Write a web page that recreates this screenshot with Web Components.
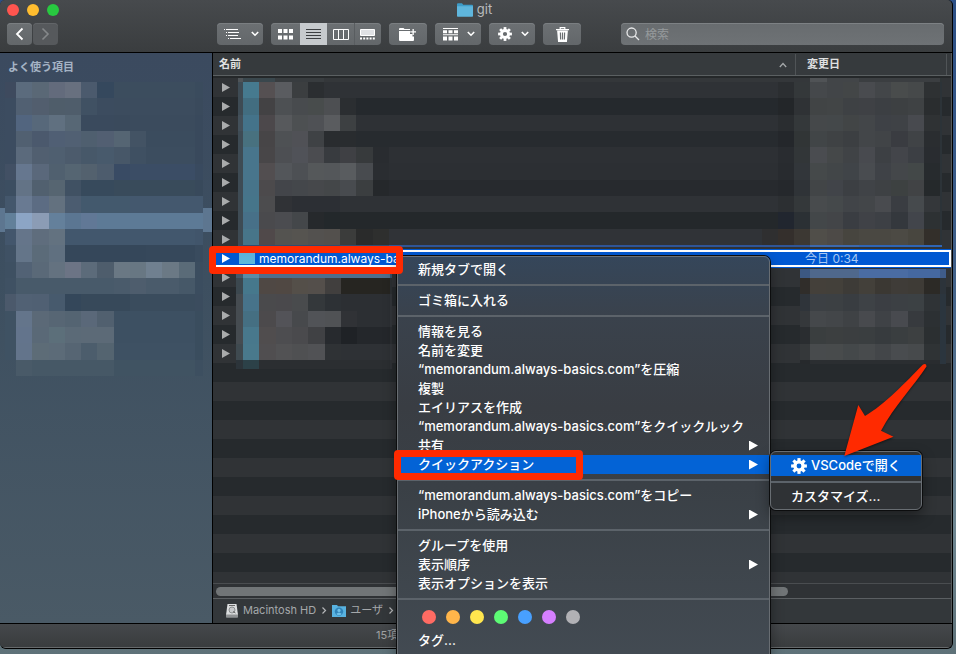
<!DOCTYPE html>
<html lang="ja">
<head>
<meta charset="utf-8">
<title>git</title>
<style>
html,body{margin:0;height:100%}
body{font-family:Inter,"Noto Sans CJK JP",sans-serif;font-size:13px;line-height:19px;color:#fff;overflow:hidden}
</style>
</head>
<body>
<desk-top></desk-top>
<script>
const BASE = `<style>*{box-sizing:border-box}button,input{font:inherit;color:inherit;border:0;margin:0;padding:0;background:none;text-align:inherit;outline:0}svg{display:block}</style>`;
function define(name, html, setup) {
  const t = document.createElement('template');
  t.innerHTML = BASE + html;
  customElements.define(name, class extends HTMLElement {
    constructor() {
      super();
      this.attachShadow({mode: 'open'}).append(t.content.cloneNode(true));
    }
    connectedCallback() { if (setup) setup(this, this.shadowRoot); }
  });
}
const labelButton = (host, root) => {
  const l = host.getAttribute('label');
  if (l) root.querySelector('button').setAttribute('aria-label', l);
};

/* Pixelated cover: "cols" and "rows" are grid templates, each text line is a row of colours, "*n" repeats */
define('pixel-cover', `<style>
:host{display:grid;pointer-events:none}
</style>`, (host, root) => {
  host.style.gridTemplateColumns = host.getAttribute('cols');
  host.style.gridTemplateRows = host.getAttribute('rows');
  host.textContent.trim().split('\n').forEach((line, r) => {
    let c = 1;
    line.trim().split(/\s+/).forEach(tok => {
      const [col, n = '1'] = tok.split('*');
      const d = document.createElement('div');
      d.style.gridArea = `${r + 1} / ${c} / ${r + 2} / ${c + +n}`;
      if (col !== '-') d.style.background = '#' + col;
      c += +n;
      root.append(d);
    });
  });
  host.textContent = '';
});

define('traffic-light', `<style>
:host{display:flex}
button{width:12px;height:12px;border-radius:50%;background:var(--c)}
</style><button></button>`, labelButton);

define('tool-button', `<style>
:host{display:flex;width:38px;height:22px}
button{flex:1;display:flex;align-items:center;justify-content:center;gap:8px;border-radius:4px;background:linear-gradient(#6c7073,#63676a);box-shadow:inset 0 1px #7a7e81}
:host([nav]){width:25px}
:host([wide]){width:46px}
:host([wide]) button{padding-left:3px}
:host([dim]) button{background:#56595c;box-shadow:inset 0 1px #626568}
:host([seg]){width:27px}
:host([seg]) button{border-radius:0}
:host([seg=first]){width:29px}
:host([seg=first]) button{border-radius:4px 0 0 4px}
:host([seg=last]) button{border-radius:0 4px 4px 0;box-shadow:inset 1px 0 #595d60,inset 0 1px #7a7e81}
:host([on]) button{background:#c6cacd;box-shadow:none}
</style><button><slot></slot></button>`, labelButton);

define('search-field', `<style>
:host{display:block}
label{display:flex;align-items:center;gap:5px;height:22px;padding:0 5px;border-radius:4px;background:linear-gradient(#686c6f,#6e7275);box-shadow:inset 0 1px #7d8184}
input{flex:1;min-width:0;font-size:12px}
input::placeholder{color:#969a9c;opacity:1}
</style><label><svg width="14" height="14" viewBox="0 0 14 14" fill="none" stroke="#e8e9ea" stroke-width="1.3"><circle cx="5.6" cy="5.6" r="4.6"/><path d="M9 9l4 4"/></svg><input type="text" placeholder="検索" aria-label="検索"></label>`);

const CHEV = `<svg width="10" height="6" viewBox="0 0 10 6" fill="none" stroke="#fff" stroke-width="1.6"><path d="M1.8 1l3.2 3.2L8.2 1"/></svg>`;
const teeth = () => Array.from({length: 8}, (_, i) => `<rect x="-1.5" y="-7.5" width="3" height="4" transform="rotate(${i * 45})"/>`).join('');
const GEAR = s => `<svg width="${s}" height="${s}" viewBox="-7.6 -7.6 15.2 15.2" fill="#fff">${teeth()}<circle r="3.9" fill="none" stroke="#fff" stroke-width="3.2"/></svg>`;
const FOLDER = (w, h) => `<svg width="${w}" height="${h}" viewBox="0 0 16 14"><path d="M0 1.2Q0 .3 1 .3h4l1.2 1.4H15q1 0 1 1V13H0z" fill="#3d9cc8"/><path d="M0 3.2h16V13q0 .7-.8.7H.8Q0 13.700 0 13z" fill="#5fb6dd"/></svg>`;

define('window-toolbar', `<style>
:host{display:block;height:53px;border-bottom:1px solid #000;background:linear-gradient(#474a4d,#3a3d3f);border-radius:5px 5px 0 0}
.title{display:grid;grid-template-columns:1fr auto 1fr;align-items:center;height:19px;padding:0 10px 0 7px;color:#b9bbbd;font-size:13px}
.lights,.name,.tools,.group,.nav{display:flex;align-items:center}
.lights{gap:8px}.name{gap:4px}
.tools{gap:8px;padding:4px 8px 0 7px}
.nav{gap:1px;margin-right:151px}
search-field{flex:1;margin-left:32px}
</style>
<div class="title"><div class="lights"><traffic-light label="閉じる" style="--c:#ff554f"></traffic-light><traffic-light label="しまう" style="--c:#ffbd2f"></traffic-light><traffic-light label="拡大" style="--c:#28c940"></traffic-light></div>
<div class="name">${FOLDER(16, 14)}<span>git</span></div><span></span></div>
<div class="tools">
<div class="nav"><tool-button nav label="戻る"><svg width="9" height="14" viewBox="0 0 9 14" fill="none" stroke="#fff" stroke-width="1.8"><path d="M7.500 1.500L2 7l5.500 5.500"/></svg></tool-button><tool-button nav dim label="進む"><svg width="9" height="14" viewBox="0 0 9 14" fill="none" stroke="#85888a" stroke-width="1.6"><path d="M1.500 1.500L7 7l-5.500 5.500"/></svg></tool-button></div>
<tool-button wide label="アウトライン"><svg width="18" height="11" viewBox="0 0 18 11" fill="#fff"><path d="M0 0h1v1H0zM2 0h12v1H2zM2 3h1v1H2zM4 3h11v1H4zM2 6h1v1H2zM4 6h10v1H4zM4 9h1v1H4zM6 9h11v1H6z"/></svg>${CHEV}</tool-button>
<div class="group"><tool-button seg="first" label="アイコン"><svg width="15" height="11" viewBox="0 0 15 11" fill="#fff"><path d="M0 0h4v4H0zM5.500 0h4v4h-4zM11 0h4v4h-4zM0 6.500h4v4H0zM5.500 6.500h4v4h-4zM11 6.500h4v4h-4z"/></svg></tool-button><tool-button seg="mid" on label="リスト"><svg width="15" height="11" viewBox="0 0 15 11" fill="#3c3f42"><path d="M0 0h15v1H0zM0 3h15v1H0zM0 6h15v1H0zM0 9h15v1H0z"/></svg></tool-button><tool-button seg="mid" label="カラム"><svg width="16" height="11" viewBox="0 0 16 11" fill="none" stroke="#fff"><path d="M.5.5h15v10H.5zM5.500.5v10M10.500.5v10"/></svg></tool-button><tool-button seg="last" label="ギャラリー"><svg width="15" height="11" viewBox="0 0 15 11" fill="#fff"><path d="M.5.5h14v6H.5z" fill="#dfe1e4" stroke="#fff"/><path d="M0 8.500h2v2H0zM3.200 8.500h2v2h-2zM6.400 8.500h2v2h-2zM9.600 8.500h2v2h-2zM12.800 8.500h2v2h-2z"/></svg></tool-button></div>
<tool-button label="新規フォルダ"><svg width="18" height="13" viewBox="0 0 18 13" fill="#fff"><path d="M0 1q0-1 1-1h3.500l1 1H11v1H0zM0 3h11v3h2.500v2.500H15V12q0 1-1 1H1q-1 0-1-1z"/><path d="M13.500 1h1.300v2.300H17v1.300h-2.200V7h-1.300V4.600h-2.300V3.300h2.300z"/></svg></tool-button>
<tool-button wide label="グループ"><svg width="15" height="13" viewBox="0 0 15 13" fill="#fff"><path d="M0 0h15v1H0zM0 6.200h15v1H0zM0 2.200h4v3H0zM5.500 2.200h4v3h-4zM11 2.200h4v3h-4zM0 8.600h4v4H0zM5.500 8.600h4v4h-4zM11 8.600h4v4h-4z"/></svg>${CHEV}</tool-button>
<tool-button wide label="アクション">${GEAR(14)}${CHEV}</tool-button>
<tool-button label="ゴミ箱"><svg width="13" height="15" viewBox="0 0 13 15" fill="none" stroke="#fff" stroke-width="1.200"><path d="M0 2.600h13M4.200 2.400V.7h4.600v1.700"/><path d="M1.800 4h9.400l-.8 10.300H2.600z" fill="#fff"/><path d="M4.400 5.500l.2 7M6.500 5.500v7M8.600 5.500l-.2 7" stroke="#6a6e71"/></svg></tool-button>
<search-field></search-field>
</div>`);

define('side-bar', `<style>
:host{display:block;position:relative;width:213px;border-right:1px solid #000;background:linear-gradient(#3b4a5f,#3d4f60 40%,#4a5a66)}
h2{margin:0;padding:5px 8px 11px;font-size:11px;font-weight:700;color:#a5b3c4;line-height:19px}
ul{list-style:none;margin:0;padding:0}
li{height:24px}
li.on{background:#5d7690}
pixel-cover{position:absolute;left:5px;top:29px;width:198px;height:294px}
</style>
<h2>よく使う項目</h2>
<ul><li></li><li></li><li></li><li></li><li></li><li class="on"></li></ul>
<pixel-cover cols="11px repeat(11,1fr) 8px" rows="repeat(18,1fr)">
3e4a5e 5b6b7d 5a6876 636b7c 68707f 4b5a6d 35485d 3c4d5e*5 3a4b5d
3c4c60 516072 525e6e 4f5d6a 4f5d6b 405163 3c4c5f 3c4c5e*5 3a4a5c
3c4c60 52657f 57687a 607080 576775 3a4a5d*2 3a4a5c 3b4b5d*4 39495c
3c4c60 516071 4b596d 505f74 516073 4f5f6f 525f72 556573 435364 3b4c5e*3 39495c
3c4c60 5b6a7c 515f70 4f5f70 4c5b6c 475869 485a6c 475768 3f5062 3c4d5f*3 39495c
425064 66778f 5a687b 50606f 556572 53616e 4d5c6d 394b64 3b4d65*4 394a5f
3c4e61 637386 51606f 566571 405163 374a5c*2 394b5b*5 38495b
44576c 697a92 5c6c83 63717f 4b5c70 43596d*3 44586e*5
62809a 8ca5c5 8b9cb5 64809b 5b7692 617896 5d7a96*7
43566c 65758a 5f6d7d 637280 42576d*8 41556b
3f5164 647589 5b6b79 607080 35475a*5 36485b*3 394b5e
3e5062 526275 5a6978 647280 6c7485 5c6b7a 4e5d6c 6a7884 687783 708090 6b7985 5a6b78 3b4d5f
3f5163 485a6a*6 4a5b6b 4e5d6d 4a5b6b*2 465868 3b4d5f
4b596b 516174 506073 475a6d 34475a 37495a*3 3a4c5d*4 3b4c5e
3f5263 64758b 5b6977 576674 546472 5a6879 51606f 3d5062*5 3a4d5e
3f5263 63748c 5a6977 5c6f7a 5b6a77 5c6a77*2 3d5062*5 3a4d5e
3f5263 63748b 5d6c77 5c6b78 566573 4c5d6c 546470 3e5163*5 3a4d5e
- 495a68 465866*5 405362*5 3d4f60
</pixel-cover>`);

define('file-list', `<style>
:host{display:block;position:relative;flex:1;min-height:0;overflow:hidden;background:linear-gradient(#303336 50%,#262a2d 50%) 0 25px/100% 38px}
table{width:100%;border-collapse:collapse;table-layout:fixed}
th{height:25px;padding:0 0 2px;font-size:11px;font-weight:700;text-align:left;color:#e0e1e2;line-height:19px;background:linear-gradient(#363a3d 22px,#5b6062 22px,#5b6062 23px,#25282a 23px)}
th div{display:flex;align-items:center;justify-content:space-between;height:21px;padding:0 6px}
th.date{width:156px}
th.date div{border-left:1px solid #505457;padding:0 4px 0 11px}
th.date div::after{content:"";height:21px;border-left:1px solid #505457}
th svg{margin-right:2px}
td{height:19px;padding:0;line-height:19px;white-space:nowrap}
td.n{padding-left:9px}
td.d{padding-left:10px}
.cell{display:flex;align-items:center;height:19px}
button{width:8px;height:9px;background:#a9abac;clip-path:polygon(0 0,100% 50%,0 100%)}
tr.on{background:#0058d2;position:relative}
tr.on button{background:#fff}
tr.on .d{color:#a8c8f4;font-size:12px}
tr.on .cell span{margin-left:4px;font-size:12px}
tr.on i{width:16px;height:11px;margin-left:9px;background:linear-gradient(#5fb0d8,#5cbbdc)}
tr.on td.n::after{content:"";position:absolute;inset:1px 0 1px 0;border:2px solid #fff}
.top{position:absolute;left:25px;right:9px;top:25px;height:169px}
.low{position:absolute;left:23px;width:156px;top:215px;height:101px}
.right{position:absolute;right:5px;width:146px;top:216px;height:95px}
</style>
<table><thead><tr><th><div>名前<svg width="8" height="6" viewBox="0 0 8 6" fill="none" stroke="#a3a6a8" stroke-width="1.300"><path d="M.8 5L4 1.500 7.200 5"/></svg></div></th><th class="date"><div>変更日</div></th></tr></thead><tbody></tbody></table>
<pixel-cover class="top" cols="5px repeat(43,1fr) 2px" rows="4px repeat(10,1fr) 2px">
4f5458 3a474d*2 383c3f*3 34373a*30 505356 424548*2 3b3e41*5 2e3436
3e4b54 467a8f 555052 5a5c60 3b3e40 2b2e31 2f3236*28 2b2e31 34383a 45484b 424548 434647 494b4f 434649 494c4c 46494a 2e3133 2c3338
3e4b54 426d80 434244 4d5053 484b4e 484c4c 4d4f52 2b2e31 25292d*26 232629 2f3235 414445 424546 3e4144 3f4145 3c3f43 3d4042 3f4244 2a2d2f 2c3338
43505a 44738a 4c484b 57595c 4d5052 4f5155 5a5c5f 3d4042 2e3135*26 2a2d30 34383a 45484a 44484a 424546 434649 3e4146 3f4246 484a4f 2f3234 2c3338
3e4b54 48717f 474547 4e5154 505156 3f4245 292c2f*2 272b2f*26 24272b 313536 414547 3f4244 3c3f42 434649 414447 3a3c41 404346 2a2d30 2c3338
3e4b54 48758c 484648 4d4f53 505258 4b4c50 383b3f 3f4044 373a3c 292c30 2d3034*24 292c30 323638 4a4c50 454849 404346 484a4f 3d4044 43454a 3c3f44 292c30 2c3338
3e4b54 48758c 524e50 53565a 4d5054 55585a 54575a 595c5f 484b4f 2a2d31 2c2f33*24 282b2f 32363a 45494a 424648 404448 494c50 3f4247 44474a 434848 272b2e 2c3338
3e4b54 47748a 4c4a4c 43454a 44474b 46484b 444749 484b4f 3b3e40 25282b 272a2e*24 25282c 2f3337 424547 414449 3c3f43 404347 3e4144 3d4141 414345 25292b 2c3338
3e4b54 46758a 4c4c4e 303236 2c2f34*3 2f3236*27 2c2f32 34383a 484b4d 45494b 414448 434649 494b4f 3a3d42 464a4d 34373a 2c3338
3e4b54 477088 4a4a4d 4b4c50 44474a 26292c 23282b 24282b*27 21262f 2b3034 434749 434548 3a3d42 404247 3d4045 34383d 42454b 2d3133 2c3338
3e4b54 477589 50494a 545350 565450 53514f 53504d 3b3c3b 2a2b2b 2e2f2e 303337*23 2f2f30 342f2c 3c3833 504e49 4d4a47 47453f 4a4842*2 4c4a44 48463f 332f2a 2c3338
304a70*10 2f5597*26 3d69ad*3 2f65b5*6
</pixel-cover>
<pixel-cover class="low" cols="7px repeat(9,1fr) 2px" rows="10px repeat(5,1fr) 9px">
46586a 5b8ca6 4f6e8c*8 33506c
3c484f 46788c 4f4844 504843 544f49 544f4b 413f3e 262521*3 2c3033
464c51 47738a 4a4a4c 4a494c 494b4d 34383b 2d3135 2c2f33*3 33363a
464c51 456f82 4c4a4c 535358 47494c 515357 505255 303236 2c2f33*2 33363a
464c51 48788c 504d4e 4d4d50 4a4a4d 404144 272a2e 1f2226 24272b*2 2c2f33
3f4a50 49798c 504e50 525254 4f5052 515255 2f3235 2e3135*3 33363a
2c343a 2c4148 2b2e31*8 2f3236
</pixel-cover>
<pixel-cover class="right" cols="10px repeat(8,1fr) 6px" rows="9px repeat(5,1fr) 4px">
3c5882 4f688c*3 4a6ca3*3 4568a0*2 3f5c8a
302d2a 44403a 43403a 3d3b37 43403a 3b3833 3f3c38 3e3b36 2c2a26 2c333a
2f343a 3c4044 3c4043 393d41 3e4246 3b3e43 3c4044 3c4144 2f3336 2b353e
35383b 45484b 434649 3f4245 484a4e 3f4246 484a4f 373a3e 2c3033 2b353e
2a2d30 3a3e3f 3c3f40 3b3e40 3a3e40 373b3e 3a3e40 3d4041 2b2f31 2b353e
35383a 484b4d 484b4c 44484a 484b4d 434649 494c4f 474a4c 2f3335 2b353e
26292c 2b2e31*7 292c2f 2b353e
</pixel-cover>`, (host, root) => {
  const body = root.querySelector('tbody');
  for (let i = 0; i < 15; i++) {
    const on = i === 9;
    const tr = document.createElement('tr');
    if (on) tr.className = 'on';
    tr.innerHTML = `<td class="n"><div class="cell"><button aria-label="開く"></button>${on ? '<i></i><span>memorandum.always-ba</span>' : ''}</div></td><td class="d">${on ? '今日 0:34' : ''}</td>`;
    body.append(tr);
  }
});

define('path-bar', `<style>
:host{display:block}
.track{height:16px;padding:3px 163px 0 3px;border-top:1px solid #4a4d50;border-bottom:1px solid #5b5f62;background:#2f3235}
.thumb{height:9px;border-radius:5px;background:#717577}
nav{display:flex;align-items:center;gap:5px;height:24px;padding:0 12px 1px;background:#33373a;font-size:11px;color:#a5a8aa}
a{display:flex;align-items:center;gap:4px;color:inherit;text-decoration:none}
</style>
<div class="track"><div class="thumb"></div></div>
<nav>
<a href="#hd"><svg width="14" height="14" viewBox="0 0 14 14"><path d="M2.500 0h9L13 11H1z" fill="#dcdedf"/><path d="M1 10.500h12V13q0 .7-.7.7H1.700Q1 13.700 1 13z" fill="#8f9294"/><circle cx="7" cy="6" r="3" fill="#c6c8ca" stroke="#8a8d8f"/><path d="M4 1.500h6M8 7.500l2.500 1.500" stroke="#666"/></svg>Macintosh HD</a>
<svg width="6" height="7" viewBox="0 0 6 7" fill="none" stroke="#b5b7b9" stroke-width="1.200"><path d="M1.500.5l3 3-3 3"/></svg>
<a href="#users"><svg width="14" height="12" viewBox="0 0 14 12"><path d="M0 0h5l1 1.200h8V12H0z" fill="#58b2e0"/><circle cx="7" cy="6.600" r="4.200" fill="#2f82b8"/><circle cx="7" cy="5.400" r="1.600" fill="#6fc0e8"/><path d="M4.200 9q2.800-3 5.600 0-2.800 2.400-5.600 0z" fill="#6fc0e8"/></svg>ユーザ</a>
<svg width="6" height="7" viewBox="0 0 6 7" fill="none" stroke="#b5b7b9" stroke-width="1.200"><path d="M1.500.5l3 3-3 3"/></svg>
</nav>`);

define('finder-window', `<style>
:host{display:flex;flex-direction:column;height:100%;border-right:1px solid #000;border-bottom:1px solid #000;border-radius:5px 5px 6px 6px;overflow:hidden;background:#303336}
.body{flex:1;display:flex;min-height:0}
main{flex:1;min-width:0;display:flex;flex-direction:column;border-right:1px solid #54585a}
footer{height:25px;border-top:1px solid #000;border-bottom:1px solid #66696b;background:linear-gradient(#45484b,#393c3e);font-size:11px;line-height:22px;color:#a0a2a4;display:flex;justify-content:center}
footer span{width:200px}
</style>
<window-toolbar></window-toolbar>
<div class="body"><side-bar></side-bar><main><file-list></file-list><path-bar></path-bar></main></div>
<footer><span>15項</span></footer>`);

define('menu-item', `<style>
:host{display:block}
button{display:flex;align-items:center;gap:4px;width:100%;height:19px;padding:0 11px 0 20px;font-weight:500;white-space:nowrap;line-height:19px}
:host([on]) button{background:#0363d6}
:host([tall]) button{height:21px}
:host([more]) button::after{content:"";width:9px;height:10px;margin-left:auto;background:#fff;clip-path:polygon(0 0,100% 50%,0 100%)}
</style><button role="menuitem"><slot></slot></button>`);

define('menu-line', `<style>
:host{display:block;height:2px;margin:5px 0;background:#5c636a}
</style>`);

define('tag-row', `<style>
:host{display:flex;gap:10px;padding:5px 24px 7px}
button{width:14px;height:14px;border-radius:50%}
</style>`, (host, root) => {
  [['レッド','#ff6b63'],['オレンジ','#ffb54a'],['イエロー','#ffe64e'],['グリーン','#5dfb75'],['ブルー','#48a0ff'],['パープル','#d57fff'],['グレイ','#b1b1b5']].forEach(([n, c]) => {
    const b = document.createElement('button');
    b.style.background = c;
    b.setAttribute('aria-label', n);
    root.append(b);
  });
});

define('context-menu', `<style>
:host{display:block;border:1px solid #686d72;border-radius:6px;background:var(--menu,#33373a);box-shadow:0 0 0 1px #0c0d0e,0 6px 14px rgba(0,0,0,.4)}
div{padding:3px 0}
</style><div role="menu"><slot></slot></div>`);

define('mark-box', `<style>
:host{display:block;border:7px solid #ff2a00;border-radius:4px;pointer-events:none}
</style>`);

define('desk-top', `<style>
:host{display:block;box-sizing:border-box;position:relative;height:100vh;padding:0 3px 5px 0;overflow:hidden;background:linear-gradient(#2c4f86,#3f5f88 40%,#6f8792 80%,#5e7178)}
.main{position:absolute;left:397px;top:256px;width:373px;--menu:linear-gradient(#35465a,#3a424c 60px,#393d43 150px,#3a4046 230px,#434b53)}
.main menu-item:last-child{margin-bottom:14px}
.sub{position:absolute;left:770px;top:451px;width:152px;--menu:#2f3235}
.sub menu-line{margin:5px 0 4px}
.m1{position:absolute;left:209px;top:246px;width:194px;height:28px}
.m2{position:absolute;left:394px;top:450px;width:189px;height:30px}
.arrow{position:absolute;left:840px;top:360px;filter:drop-shadow(0 1px 1px rgba(0,0,0,.5))}
</style>
<finder-window></finder-window>
<context-menu class="main">
<menu-item>新規タブで開く</menu-item><menu-line></menu-line>
<menu-item>ゴミ箱に入れる</menu-item><menu-line></menu-line>
<menu-item>情報を見る</menu-item><menu-item>名前を変更</menu-item><menu-item>“memorandum.always-basics.com”を圧縮</menu-item><menu-item>複製</menu-item><menu-item>エイリアスを作成</menu-item><menu-item>“memorandum.always-basics.com”をクイックルック</menu-item><menu-item more>共有</menu-item><menu-item more on>クイックアクション</menu-item><menu-line></menu-line>
<menu-item>“memorandum.always-basics.com”をコピー</menu-item><menu-item more>iPhoneから読み込む</menu-item><menu-line></menu-line>
<menu-item>グループを使用</menu-item><menu-item more>表示順序</menu-item><menu-item>表示オプションを表示</menu-item><menu-line></menu-line>
<tag-row></tag-row><menu-item>タグ...</menu-item>
</context-menu>
<context-menu class="sub"><menu-item on tall>${GEAR(16)}VSCodeで開く</menu-item><menu-line></menu-line><menu-item>カスタマイズ...</menu-item></context-menu>
<mark-box class="m1"></mark-box><mark-box class="m2"></mark-box>
<svg class="arrow" width="92" height="100" viewBox="0 0 92 100" fill="#ff2a00"><path d="M4.300 96L18.300 45l6.700 11C44 45 66 22 83 4.500q3.500-1.500 3.500 2C74 26 54 46 41 70.700l12.500 6z"/></svg>`);
</script>
</body>
</html>
